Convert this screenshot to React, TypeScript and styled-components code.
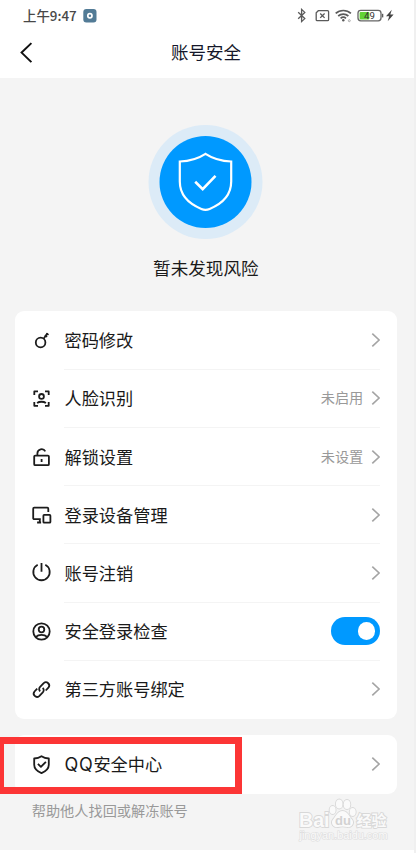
import React from "react";
import styled, { createGlobalStyle } from "styled-components";

const GlobalStyle = createGlobalStyle`
  * { box-sizing: border-box; }
  body { margin: 0; background: #fff; }
`;

const Page = styled.div`
  position: relative;
  width: 416px;
  height: 853px;
  overflow: hidden;
  background: #fff;
  border-right: 2px solid #f0f0f0;
  font-family: Roboto, "Noto Sans CJK SC", sans-serif;
  color: #1a1a1a;
`;

const StatusBar = styled.div`
  height: 32px;
  padding: 0 19px 0 23px;
  display: flex;
  align-items: center;
  justify-content: space-between;
`;

const Clock = styled.div`
  display: flex;
  align-items: center;
  width: 74px;
  height: 31px;
  justify-content: space-between;
  font-family: "Noto Sans CJK SC", sans-serif;
  font-size: 13.4px;
  line-height: 20px;
  font-weight: 500;
  color: #484848;
  white-space: nowrap;
`;

const Time = styled.span`
  height: 20px;
  margin-top: -2px;
`;

const NavBar = styled.header`
  height: 46px;
  display: grid;
  grid-template-columns: 60px 292px 60px;
  align-items: center;
`;

const BackButton = styled.button`
  border: 0;
  padding: 0 0 4px 19px;
  height: 46px;
  background: none;
  display: flex;
  align-items: center;
`;

const Title = styled.h1`
  margin: 0;
  text-align: center;
  font-size: 17.5px;
  line-height: 42px;
  height: 46px;
  font-weight: 400;
  color: #15172a;
`;

const Content = styled.main`
  height: 772px;
  background: #f4f4f4;
  padding: 46.5px 17px 0 14.7px;
`;

const Hero = styled.section`
  height: 186.5px;
  display: flex;
  flex-direction: column;
  align-items: center;
`;

const HeroText = styled.div`
  margin-top: 16px;
  font-size: 17.6px;
  line-height: 26px;
`;

const Card = styled.section`
  width: 382.6px;
  background: #fff;
  border-radius: 9px;
  padding-top: 0.6px;
  margin-bottom: 16.4px;
`;

const Row = styled.div`
  height: 58.2px;
  padding: 0 17px 0 15.3px;
  display: flex;
  align-items: center;
`;

const RowIcon = styled.svg`
  flex: none;
  margin-right: 10.5px;
  fill: none;
  stroke: #1c1c1c;
  stroke-width: 1.8;
  stroke-linejoin: round;
`;

const RowBody = styled.div<{ $line: boolean }>`
  flex: 1;
  height: 58.2px;
  display: flex;
  align-items: center;
  border-bottom: 1px solid ${(p) => (p.$line ? "#f4f4f4" : "transparent")};
`;

const Label = styled.span`
  flex: 1;
  font-size: 17.2px;
  line-height: 26px;
  padding-top: 2px;
`;

const Latin = styled.span`
  font-family: Inter, sans-serif;
  font-size: 18px;
  line-height: 1;
  letter-spacing: 0.7px;
`;

const Value = styled.span`
  font-size: 14.2px;
  line-height: 20px;
  color: #999;
  margin-right: 8px;
`;

const Toggle = styled.div`
  width: 49.4px;
  height: 27.4px;
  border-radius: 14px;
  background: #0099ff;
  display: flex;
  align-items: center;
  justify-content: flex-end;
  padding-right: 5px;
`;

const Knob = styled.div`
  width: 17.4px;
  height: 17.4px;
  border-radius: 50%;
  background: #fff;
`;

const Hint = styled.p`
  margin: -9.4px 0 0 17px;
  font-size: 14.2px;
  line-height: 21px;
  color: #999;
`;

const Highlight = styled.div`
  position: absolute;
  left: 0;
  top: 737px;
  width: 242px;
  height: 57px;
  border: solid #fc3535;
  border-width: 7px 7px 7px 4px;
`;

const Watermark = styled.svg`
  position: absolute;
  left: 294px;
  top: 794px;
`;

const Chevron = () => (
  <svg width="9" height="14" viewBox="0 0 9 14" fill="none" stroke="#a4a4a4" strokeWidth="1.6">
    <path d="M1.3 .6 8.1 7 1.3 13.4" />
  </svg>
);

const icons: Record<string, React.ReactNode> = {
  key: (
    <>
      <circle cx="11.1" cy="14" r="4.8" />
      <path d="M14.1 10.2 18 4.8" />
      <path d="M15.4 6.8l2.2 1.6M17 4.9l2 1.5" strokeWidth="1.7" />
    </>
  ),
  face: (
    <>
      <path d="M4.8 8.6V4.9h3.7M15.5 4.9h3.7v3.7M19.2 15.6v3.7h-3.7M8.5 19.3H4.8v-3.7" />
      <circle cx="12" cy="9.9" r="2.4" />
      <path d="M7.6 16.5c2.3-1.7 6.5-1.7 8.8 0" />
    </>
  ),
  lock: (
    <>
      <rect x="4.7" y="11.1" width="14.7" height="9.6" rx="1" />
      <path d="M7.9 11V8.8a4.2 4.2 0 0 1 7.9-1.9M12.1 14.5v3" />
    </>
  ),
  devices: (
    <>
      <path d="M18.8 9.6V6.2a1 1 0 0 0-1-1H4.7a1 1 0 0 0-1 1v9.5a1 1 0 0 0 1 1h6.6M7.6 20h4M10.3 16.7V20" />
      <rect x="13.9" y="12.4" width="7" height="7.8" rx=".8" />
    </>
  ),
  power: <path d="M8.2 4.3a8.2 8.2 0 1 0 7.6 0M12 2.5v8.7" />,
  person: (
    <>
      <circle cx="12" cy="12" r="8.2" />
      <circle cx="12" cy="10" r="2.8" />
      <path d="M6.4 17.3c2.6-2.5 8.6-2.5 11.2 0" />
    </>
  ),
  link: (
    <>
      <path d="M10.7 13.9a3.2 3.2 0 0 1-.1-4.6l3.6-3.7a3.3 3.3 0 0 1 4.7 4.6l-2.7 2.8" />
      <path d="M13.2 10.3a3.2 3.2 0 0 1 .1 4.6l-3.6 3.7A3.3 3.3 0 0 1 5 14l2.7-2.8" />
    </>
  ),
  shield: (
    <>
      <path d="M12 3.7c2.1 1.4 4.5 2.1 7.3 2.3v6.2c0 3.7-2.4 6.3-7.3 8.4-4.9-2.1-7.3-4.7-7.3-8.4V6C7.5 5.8 9.9 5.1 12 3.7Z" />
      <path d="m8.4 11.3 3 3 5-5" />
    </>
  ),
};

type Item = { icon: string; label: React.ReactNode; value?: string; toggle?: boolean };

const items: Item[] = [
  { icon: "key", label: "密码修改" },
  { icon: "face", label: "人脸识别", value: "未启用" },
  { icon: "lock", label: "解锁设置", value: "未设置" },
  { icon: "devices", label: "登录设备管理" },
  { icon: "power", label: "账号注销" },
  { icon: "person", label: "安全登录检查", toggle: true },
  { icon: "link", label: "第三方账号绑定" },
];

const securityCenter: Item = {
  icon: "shield",
  label: (
    <>
      <Latin>QQ</Latin>安全中心
    </>
  ),
};

function SettingRow({ item, line }: { item: Item; line: boolean }) {
  return (
    <Row>
      <RowIcon width="24" height="24" viewBox="0.5 0.5 24 24">
        {icons[item.icon]}
      </RowIcon>
      <RowBody $line={line}>
        <Label>{item.label}</Label>
        {item.value && <Value>{item.value}</Value>}
        {item.toggle ? (
          <Toggle role="switch" aria-checked="true">
            <Knob />
          </Toggle>
        ) : (
          <Chevron />
        )}
      </RowBody>
    </Row>
  );
}

const RecorderBadge = () => (
  <svg width="14" height="14" viewBox="0 0 14 14">
    <rect x=".3" y=".1" width="13.2" height="13.4" rx="3" fill="#527b96" />
    <circle cx="6.9" cy="6.7" r="2.1" fill="none" stroke="#fff" strokeWidth="1.7" />
  </svg>
);

const StatusIcons = () => (
  <svg width="100" height="16" viewBox="295 8 100 16" fill="none" stroke="#5a5a5a" strokeWidth="1.3">
    <path d="M298.2 12.2l6.6 6.4-3.2 3V9.4l3.2 3-6.6 6.4" />
    <path d="M318.3 10.7h9.3a1 1 0 0 1 1 1v8a1 1 0 0 1-1 1h-10.4a1 1 0 0 1-1-1v-6.9Z" />
    <path d="m320.2 13.5 4.4 4.4m0-4.4-4.4 4.4" />
    <path d="M335.7 13.4c4.2-3.9 11-3.9 15.2 0M338.2 16c2.9-2.6 7.3-2.6 10.2 0M340.6 18.4c1.5-1.3 3.9-1.3 5.4 0" strokeWidth="1.7" />
    <circle cx="343.3" cy="20.2" r="1.2" fill="#5a5a5a" stroke="none" />
    <circle cx="349.3" cy="20.7" r="1" strokeWidth=".8" stroke="#999" />
    <rect x="358" y="10.3" width="23" height="10.6" rx="2.8" stroke="#666" />
    <rect x="359.6" y="12" width="9.8" height="7.4" rx="1" fill="#63d336" stroke="none" />
    <path d="M382.6 13.8v3.6" strokeWidth="1.4" />
    <text x="364" y="19" fontFamily="Roboto, sans-serif" fontSize="9.6" fill="#333" stroke="none">49</text>
    <path d="m391.8 9.7-5.8 6.5h3.2l-1.5 5 5.9-6.7h-3.3Z" fill="#444" stroke="none" />
  </svg>
);

const HeroShield = () => (
  <svg width="115" height="115" viewBox="0 0 115 115" fill="none" stroke="#fff">
    <circle cx="57.5" cy="57" r="57" fill="#dcebf7" stroke="none" />
    <circle cx="57.5" cy="57" r="46" fill="#0099ff" stroke="none" />
    <path d="M57.5 28.8c7.2 4.7 15.7 7.3 25.7 7.7v20c0 13.6-8.7 22.1-21.6 27.4q-4.1 1.8-8.2 0C40.500 78.600 31.800 70.100 31.800 56.500v-20c10-.4 18.500-3 25.700-7.700Z" strokeWidth="2.2" />
    <path d="m47.200 56.800 7.500 7.400 12.800-13.400" strokeWidth="2.6" />
  </svg>
);

export default function App() {
  return (
    <Page>
      <GlobalStyle />
      <StatusBar>
        <Clock>
          <Time>上午9:47</Time>
          <RecorderBadge />
        </Clock>
        <StatusIcons />
      </StatusBar>
      <NavBar>
        <BackButton aria-label="返回">
          <svg width="14" height="22" viewBox="0 0 14 22" fill="none" stroke="#111" strokeWidth="2">
            <path d="M12.4 1.1 2.6 10.6l9.8 9.5" />
          </svg>
        </BackButton>
        <Title>账号安全</Title>
      </NavBar>
      <Content>
        <Hero>
          <HeroShield />
          <HeroText>暂未发现风险</HeroText>
        </Hero>
        <Card>
          {items.map((item, i) => (
            <SettingRow key={item.icon} item={item} line={i < items.length - 1} />
          ))}
        </Card>
        <Card>
          <SettingRow item={securityCenter} line={false} />
        </Card>
        <Hint>帮助他人找回或解冻账号</Hint>
      </Content>
      <Highlight />
      <Watermark width="100" height="50" viewBox="294 794 100 50" fill="#fafafa" stroke="#d8d8d8" strokeWidth="1.8" paintOrder="stroke" fontFamily='"Liberation Sans", "Noto Sans CJK SC", sans-serif'>
        <text x="299" y="826.5" fontSize="20" fontWeight="700" textLength="30.5" lengthAdjust="spacingAndGlyphs">Bai</text>
        <ellipse cx="332.6" cy="810" rx="3" ry="4" />
        <ellipse cx="339.2" cy="804" rx="3.3" ry="4.5" />
        <ellipse cx="347" cy="804.5" rx="3.3" ry="4.5" />
        <ellipse cx="352.7" cy="812" rx="3" ry="4" />
        <path d="M342.5 811c5 0 7 6 9.5 8.5 3 4-1 8.5-5 7.5-3-.7-6-.7-9 0-4 1-8-3.5-5-7.5 2.5-2.5 4.5-8.5 9.5-8.5Z" />
        <text x="335" y="824.5" fontSize="13" fontWeight="700" fill="#d2d2d2" stroke="none">du</text>
        <text x="356.5" y="825.5" fontSize="15" fontWeight="700">经验</text>
        <text x="299.5" y="838.5" fontSize="10.5" strokeWidth="1.2" stroke="#dedede" textLength="88" lengthAdjust="spacingAndGlyphs">jingyan.baidu.com</text>
      </Watermark>
    </Page>
  );
}
